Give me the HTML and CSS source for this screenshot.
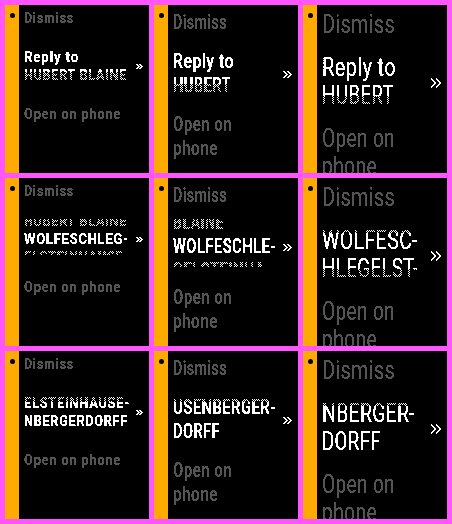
FILE: index.html
```
<!DOCTYPE html>
<html lang="en">
<head>
<meta charset="utf-8">
<title>Action menu sizes</title>
<link rel="stylesheet" href="styles.css">
</head>
<body>
<svg class="defs" aria-hidden="true">
  <filter id="crisp" x="0" y="0" width="1" height="1" color-interpolation-filters="sRGB">
    <feComponentTransfer><feFuncA type="discrete" tableValues="0 0 1 1 1"/></feComponentTransfer>
  </filter>
  <symbol id="more-s" viewBox="0 0 7 5"><path d="M0 0h2v1h1v1h1v1H3v1H2v1H0V4h1V3h1V2H1V1H0zM3 0h2v1h1v1h1v1H6v1H5v1H3V4h1V3h1V2H4V1H3z"/></symbol>
  <symbol id="more-m" viewBox="0 0 9 7"><path id="chev-m" d="M0 0h2v1h1v1h1v1h1v1H4v1H3v1H2v1H0V6h1V5h1V4h1V3H2V2H1V1H0z"/><use href="#chev-m" x="4"/></symbol>
  <symbol id="more-l" viewBox="0 0 11 10"><path id="chev-l" d="M0 0h1v1h1v1h1v1h1v1h1v2H4v1H3v1H2v1H1v1H0V8h1V7h1V6h1V4H2V3H1V2H0z"/><use href="#chev-l" x="5"/></symbol>
</svg>
<main class="board">
  <section class="screen small">
    <div class="bar"><i class="dot"></i></div>
    <div class="menu">
      <svg class="line"><text textLength="50">Dismiss</text></svg>
      <div class="selected"><div class="window fade-bottom">
        <svg class="line"><text textLength="55">Reply to</text></svg>
        <svg class="line"><text textLength="103">HUBERT BLAINE</text></svg>
      </div><svg class="more"><use href="#more-s"/></svg></div>
      <svg class="line"><text textLength="97">Open on phone</text></svg>
    </div>
  </section>
  <section class="screen medium">
    <div class="bar"><i class="dot"></i></div>
    <div class="menu">
      <svg class="line"><text textLength="54">Dismiss</text></svg>
      <div class="selected"><div class="window fade-bottom">
        <svg class="line"><text textLength="61">Reply to</text></svg>
        <svg class="line"><text textLength="58">HUBERT</text></svg>
      </div><svg class="more"><use href="#more-m"/></svg></div>
      <svg class="line"><text textLength="59">Open on</text></svg>
      <svg class="line"><text textLength="45">phone</text></svg>
    </div>
  </section>
  <section class="screen large">
    <div class="bar"><i class="dot"></i></div>
    <div class="menu">
      <svg class="line"><text textLength="73">Dismiss</text></svg>
      <div class="selected"><div class="window fade-bottom">
        <svg class="line"><text textLength="74">Reply to</text></svg>
        <svg class="line"><text textLength="72">HUBERT</text></svg>
      </div><svg class="more"><use href="#more-l"/></svg></div>
      <svg class="line"><text textLength="73">Open on</text></svg>
      <svg class="line"><text textLength="55">phone</text></svg>
    </div>
  </section>

  <section class="screen small">
    <div class="bar"><i class="dot"></i></div>
    <div class="menu">
      <svg class="line"><text textLength="50">Dismiss</text></svg>
      <div class="selected"><div class="window fade-top fade-bottom">
        <svg class="line"><text textLength="103">HUBERT BLAINE</text></svg>
        <svg class="line"><text textLength="105">WOLFESCHLEG-</text></svg>
        <svg class="line"><text textLength="105">ELSTEINHAUSE-</text></svg>
      </div><svg class="more"><use href="#more-s"/></svg></div>
      <svg class="line"><text textLength="97">Open on phone</text></svg>
    </div>
  </section>
  <section class="screen medium">
    <div class="bar"><i class="dot"></i></div>
    <div class="menu">
      <svg class="line"><text textLength="54">Dismiss</text></svg>
      <div class="selected"><div class="window fade-top fade-bottom">
        <svg class="line"><text textLength="51">BLAINE</text></svg>
        <svg class="line"><text textLength="103">WOLFESCHLE-</text></svg>
        <svg class="line"><text textLength="98">GELSTEINHA-</text></svg>
      </div><svg class="more"><use href="#more-m"/></svg></div>
      <svg class="line"><text textLength="59">Open on</text></svg>
      <svg class="line"><text textLength="45">phone</text></svg>
    </div>
  </section>
  <section class="screen large">
    <div class="bar"><i class="dot"></i></div>
    <div class="menu">
      <svg class="line"><text textLength="73">Dismiss</text></svg>
      <div class="selected"><div class="window fade-top fade-bottom">
        <svg class="line"><text textLength="96">WOLFESC-</text></svg>
        <svg class="line"><text textLength="96">HLEGELST-</text></svg>
      </div><svg class="more"><use href="#more-l"/></svg></div>
      <svg class="line"><text textLength="73">Open on</text></svg>
      <svg class="line"><text textLength="55">phone</text></svg>
    </div>
  </section>

  <section class="screen small">
    <div class="bar"><i class="dot"></i></div>
    <div class="menu">
      <svg class="line"><text textLength="50">Dismiss</text></svg>
      <div class="selected"><div class="window fade-top">
        <svg class="line"><text textLength="106">ELSTEINHAUSE-</text></svg>
        <svg class="line"><text textLength="104">NBERGERDORFF</text></svg>
      </div><svg class="more"><use href="#more-s"/></svg></div>
      <svg class="line"><text textLength="97">Open on phone</text></svg>
    </div>
  </section>
  <section class="screen medium">
    <div class="bar"><i class="dot"></i></div>
    <div class="menu">
      <svg class="line"><text textLength="54">Dismiss</text></svg>
      <div class="selected"><div class="window fade-top">
        <svg class="line"><text textLength="103">USENBERGER-</text></svg>
        <svg class="line"><text textLength="47">DORFF</text></svg>
      </div><svg class="more"><use href="#more-m"/></svg></div>
      <svg class="line"><text textLength="59">Open on</text></svg>
      <svg class="line"><text textLength="45">phone</text></svg>
    </div>
  </section>
  <section class="screen large">
    <div class="bar"><i class="dot"></i></div>
    <div class="menu">
      <svg class="line"><text textLength="73">Dismiss</text></svg>
      <div class="selected"><div class="window fade-top">
        <svg class="line"><text textLength="93">NBERGER-</text></svg>
        <svg class="line"><text textLength="59">DORFF</text></svg>
      </div><svg class="more"><use href="#more-l"/></svg></div>
      <svg class="line"><text textLength="73">Open on</text></svg>
      <svg class="line"><text textLength="55">phone</text></svg>
    </div>
  </section>
</main>
<script src="script.js"></script>
</body>
</html>
```
FILE: script.js
```
// Condense the glyphs themselves so each line keeps its set width.
document.querySelectorAll(".line text").forEach(function (text) {
  text.setAttribute("lengthAdjust", "spacingAndGlyphs");
});
```
FILE: styles.css
```
* { box-sizing: border-box; }

body {
  margin: 0;
  background: #ff55ff;
  font-family: Roboto, "Liberation Sans", sans-serif;
}

.defs { position: absolute; width: 0; height: 0; }

.board {
  display: grid;
  grid-template-columns: repeat(3, 144px);
  grid-auto-rows: 168px;
  gap: 5px;
  padding: 5px;
}

.screen {
  display: flex;
  overflow: hidden;
  background: #000;
}

.small { --lh: 18px; --base: 16px; --gap: 21px; --size: 15.5px; --weight: 700; --track: 0.9px; --mw: 7px; --mh: 5px; --ml: 111px; --nudge: 5px; }
.medium { --lh: 24px; --base: 22px; --gap: 15px; --size: 19.7px; --weight: 600; --track: 0.6px; --mw: 9px; --mh: 7px; --ml: 109px; --nudge: 9px; }
.large { --lh: 28px; --base: 26px; --gap: 15px; --size: 25.3px; --weight: 400; --track: 0.4px; --mw: 11px; --mh: 10px; --ml: 108px; --nudge: 10px; }

.bar {
  flex: 0 0 14px;
  padding: 8px 0 0 5px;
  background: #ffaa00;
}

.dot {
  display: block;
  width: 5px;
  height: 5px;
  border-radius: 50%;
  background: #000;
}

.menu {
  flex: 1;
  min-width: 0;
  padding: 2px 0 0 5px;
  color: #555;
}

.line {
  display: block;
  flex: none;
  width: 108px;
  height: var(--lh);
  overflow: visible;
  filter: url(#crisp);
}

.line text {
  fill: currentColor;
  font-size: var(--size);
  font-weight: var(--weight);
  letter-spacing: var(--track);
  transform: translateY(var(--base));
}

.selected {
  display: flex;
  align-items: center;
  margin: var(--gap) 0;
  color: #fff;
}

.window {
  position: relative;
  display: flex;
  flex: 0 0 var(--ml);
  flex-direction: column;
  justify-content: center;
  height: calc(2 * var(--lh));
  overflow: hidden;
}

.fade-top::before,
.fade-bottom::after {
  content: "";
  position: absolute;
  z-index: 1;
  left: 0;
  right: 0;
  height: 10px;
  background: repeating-conic-gradient(#000 0 25%, transparent 0 50%) 0 0 / 2px 2px;
}

.fade-top::before { top: 0; }
.fade-bottom::after { bottom: 0; }

.more {
  flex: none;
  width: var(--mw);
  height: var(--mh);
  margin-top: var(--nudge);
  margin-left: 1px;
  fill: currentColor;
  shape-rendering: crispEdges;
}
```
